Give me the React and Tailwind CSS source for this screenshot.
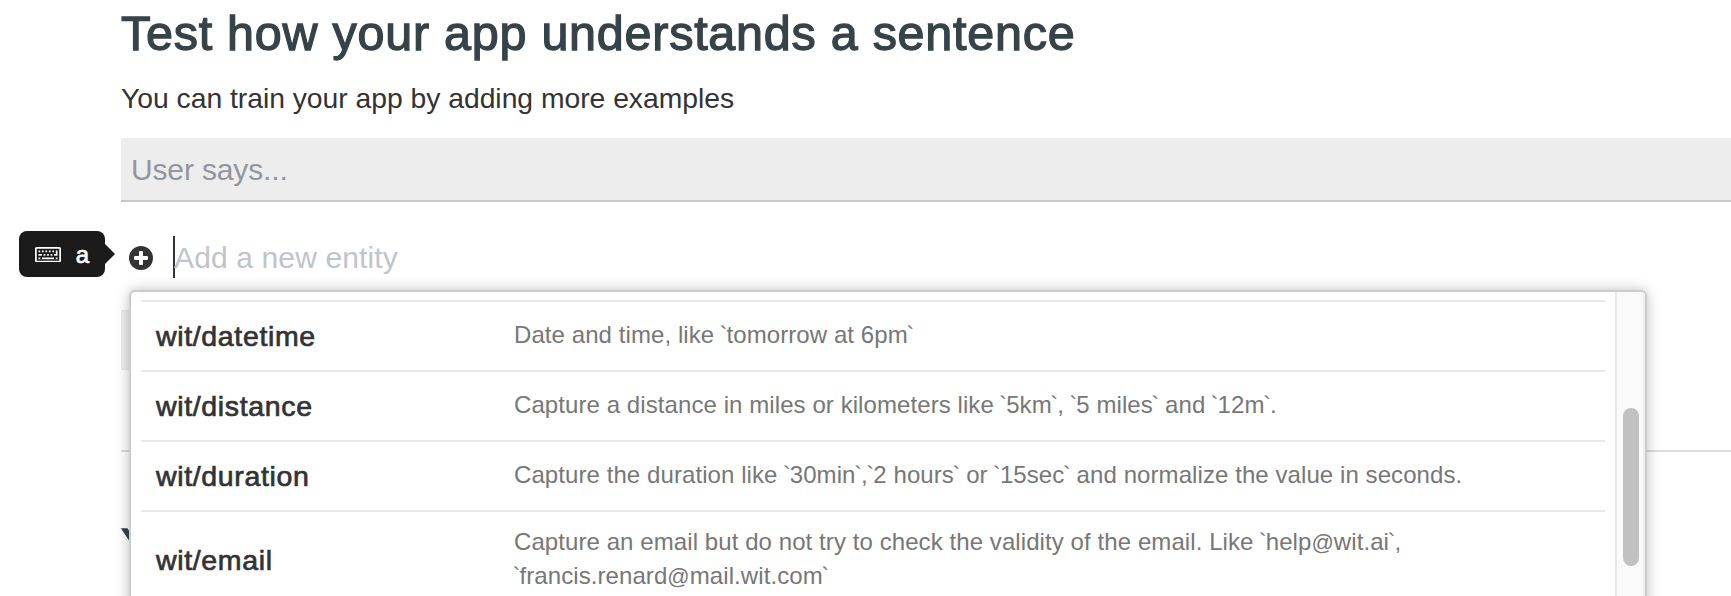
const entities = [
  { name: "wit/datetime", lines: ["Date and time, like `tomorrow at 6pm`"] },
  {
    name: "wit/distance",
    lines: ["Capture a distance in miles or kilometers like `5km`, `5 miles` and `12m`."],
  },
  {
    name: "wit/duration",
    lines: ["Capture the duration like `30min`,`2 hours` or `15sec` and normalize the value in seconds."],
  },
  {
    name: "wit/email",
    lines: [
      "Capture an email but do not try to check the validity of the email. Like `help@wit.ai`,",
      "`francis.renard@mail.wit.com`",
    ],
  },
];

function KeyboardIcon() {
  return (
    <svg viewBox="0 96 1920 1152" className="h-[15.6px] w-[26px] shrink-0" fill="currentColor">
      <path
        fillRule="evenodd"
        d="M128 96h1664q53 0 90.500 37.500t37.500 90.500v896q0 53-37.500 90.500t-90.500 37.500h-1664q-53 0-90.500-37.500t-37.500-90.500v-896q0-53 37.500-90.500t90.500-37.500zM128 224v896h1664v-896z"
      />
      <path d="M256 352h128v128h-128zM512 352h128v128h-128zM768 352h128v128h-128zM1024 352h128v128h-128zM1280 352h128v128h-128z" />
      <path d="M256 608h256v128h-256zM640 608h128v128h-128zM896 608h128v128h-128zM1152 608h128v128h-128z" />
      <path d="M1536 352h128v384h-256v-128h128z" />
      <path d="M256 864h128v128h-128zM512 864h896v128h-896zM1536 864h128v128h-128z" />
    </svg>
  );
}

function PlusCircleIcon() {
  return (
    <svg viewBox="0 0 24 24" className="mt-[15px] ml-[14px] size-6 shrink-0">
      <circle cx="12" cy="12" r="12" fill="#333" />
      <rect x="5" y="10" width="14" height="4" rx="1" fill="#fff" />
      <rect x="10" y="5" width="4" height="14" rx="1" fill="#fff" />
    </svg>
  );
}

/* Backticks and at signs are set narrower than the rest of the sentence. */
function Description({ text }) {
  return text.split(/([`@])/).map((part, i) => {
    if (part === "`") return <span key={i} className="-ml-[1.6px] tracking-[-0.9px]">{part}</span>;
    if (part === "@") return <span key={i} className="text-[22px]">{part}</span>;
    return part;
  });
}

function EntityRow({ name, lines }) {
  const tall = lines.length > 1;
  return (
    <li className={`flex border-t-2 border-[#e9e9ed] pl-[15px] ${tall ? "h-[98px]" : "h-[70px]"}`}>
      <div className="flex w-[358px] shrink-0 items-center text-[28.5px] leading-[34px] tracking-[0.65px] text-[#333] [-webkit-text-stroke:0.7px_#333]">
        {name}
      </div>
      <div className={`text-[24px] leading-[34px] tracking-[0.08px] text-[#777] ${tall ? "pt-[13px]" : "pt-4"}`}>
        {lines.map((line) => (
          <div key={line} className="h-[34px]">
            <Description text={line} />
          </div>
        ))}
      </div>
    </li>
  );
}

function EntityMenu() {
  return (
    <div className="absolute top-[290px] left-[129px] flex h-[400px] w-[1518px] overflow-hidden rounded-[6px] border-2 border-[#ccc] bg-white shadow-[0_0_14px_rgba(0,0,0,0.25)]">
      <ul className="flex-1 px-[10px] pt-2">
        {entities.map((entity) => (
          <EntityRow key={entity.name} {...entity} />
        ))}
      </ul>
      <div className="flex w-[30px] shrink-0 border-r-2 border-l-2 border-[#e8e8e8] border-r-[#ededed] bg-[#fafafa] pt-[116px] pl-[6px]">
        <div className="h-[158px] w-4 rounded-full bg-[#c1c1c1]" />
      </div>
    </div>
  );
}

export default function App() {
  return (
    <div className="relative h-[596px] w-full overflow-hidden bg-white font-['Liberation_Sans',Arial,sans-serif] whitespace-nowrap">
      <main className="pt-[3px] pl-[121px]">
        <h1 className="text-[48.5px] leading-[60px] tracking-[0.74px] text-[#364349] [-webkit-text-stroke:1.3px_#364349]">
          Test how your app understands a sentence
        </h1>
        <p className="mt-[15px] text-[28.3px] leading-[40px] tracking-[-0.02px] text-[#333]">
          You can train your app by adding more examples
        </p>
        <div className="mt-5 flex h-16 items-center border-b-2 border-[#c8c8c8] bg-[#ededed] pt-px pl-[10px] text-[30px] tracking-[-0.15px] text-[#93969e]">
          User says...
        </div>

        <div className="mt-[29px] -ml-[102px] flex h-[47px]">
          <div className="flex h-[46px] w-[86px] shrink-0 items-center justify-between rounded-lg bg-[#1b1b1b] pt-px pr-4 pl-4 text-white">
            <KeyboardIcon />
            <span className="text-[24px] leading-none [-webkit-text-stroke:0.7px_#fff]">a</span>
          </div>
          <svg viewBox="0 0 10 20" className="mt-[13px] h-5 w-[10px] shrink-0">
            <path d="M0 0L10 10L0 20z" fill="#1b1b1b" />
          </svg>
          <PlusCircleIcon />
          <div className="mt-[5px] ml-5 flex h-[42px] items-center border-l-2 border-[#333] text-[30px] tracking-[0.13px] text-[#c0c4cb]">
            <span className="-ml-px">Add a new entity</span>
          </div>
        </div>

        <div className="mt-8 h-[60px] w-[600px] bg-[#ededed]" />
        <div className="mt-20 h-0.5 bg-[#ddd]" />
        <h2 className="mt-[63px] text-[49px] leading-[60px] text-[#364349] [-webkit-text-stroke:1.3px_#364349]">Y</h2>
      </main>
      <EntityMenu />
    </div>
  );
}
